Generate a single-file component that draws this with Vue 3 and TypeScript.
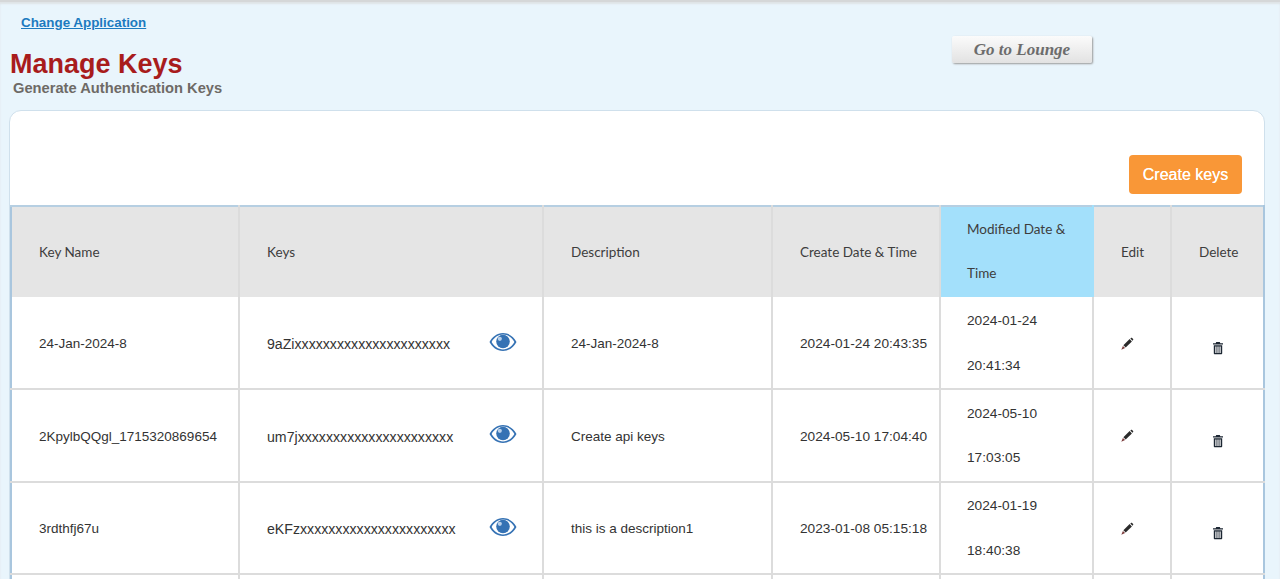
<script setup lang="ts">
interface Row { name: string; key: string; desc: string; created: string; modDate: string; modTime: string }
const rows: Row[] = [
  { name: '24-Jan-2024-8', key: '9aZixxxxxxxxxxxxxxxxxxxxxx', desc: '24-Jan-2024-8', created: '2024-01-24 20:43:35', modDate: '2024-01-24', modTime: '20:41:34' },
  { name: '2KpylbQQgl_1715320869654', key: 'um7jxxxxxxxxxxxxxxxxxxxxxx', desc: 'Create api keys', created: '2024-05-10 17:04:40', modDate: '2024-05-10', modTime: '17:03:05' },
  { name: '3rdthfj67u', key: 'eKFzxxxxxxxxxxxxxxxxxxxxxx', desc: 'this is a description1', created: '2023-01-08 05:15:18', modDate: '2024-01-19', modTime: '18:40:38' },
]
</script>

<template>
  <div class="page">
    <a class="change" href="#">Change Application</a>
    <div class="head">
      <div class="titles">
        <h1>Manage Keys</h1>
        <h2>Generate Authentication Keys</h2>
      </div>
      <button class="lounge" type="button">Go to Lounge</button>
    </div>
    <section class="panel">
      <div class="actions"><button class="create" type="button">Create keys</button></div>
      <table>
        <colgroup>
          <col class="c1" /><col class="c2" /><col class="c3" /><col class="c4" />
          <col class="c5" /><col class="c6" /><col class="c7" />
        </colgroup>
        <thead>
          <tr>
            <th>Key Name</th><th>Keys</th><th>Description</th><th>Create Date &amp; Time</th>
            <th class="sorted">Modified Date &amp; Time</th><th>Edit</th><th>Delete</th>
          </tr>
        </thead>
        <tbody>
          <tr v-for="r in rows" :key="r.name">
            <td>{{ r.name }}</td>
            <td>
              <div class="keycell">
                <span class="keytext">{{ r.key }}</span>
                <svg class="eye" viewBox="0 0 28 20" width="28" height="20" aria-hidden="true">
                  <path fill="#3572b4" fill-rule="evenodd" d="M14 1C8 1 3 5 .5 10 3 15 8 19 14 19s11-4 13.500-9C25 5 20 1 14 1Zm0 1.600C9.200 2.600 5 5.600 2.600 10 5 14.400 9.200 17.400 14 17.400s9-3 11.400-7.400C23 5.600 18.800 2.600 14 2.600Z" />
                  <circle cx="14" cy="9.500" r="6.800" fill="#3572b4" />
                  <circle cx="10.800" cy="6.800" r="2.100" fill="#b9d0ea" />
                </svg>
              </div>
            </td>
            <td>{{ r.desc }}</td>
            <td class="date">{{ r.created }}</td>
            <td class="date mod">{{ r.modDate }}<br />{{ r.modTime }}</td>
            <td class="ic">
              <svg class="pencil" viewBox="0 0 14 14" width="14" height="14" aria-hidden="true">
                <path fill="#2a2a2a" d="M3.400 8.300 9.600 2.100l2.300 2.300-6.200 6.200Z" />
                <path fill="#2a2a2a" d="M10.300 1.400 11 .9c.4-.3.8-.3 1.100 0l1 1c.3.3.3.7 0 1.100l-.6.700Z" />
                <path fill="#7a3a3a" d="M2.900 8.900 5.100 11.100 1.300 12.700Z" />
              </svg>
            </td>
            <td class="ic">
              <svg class="trash" viewBox="0 0 12 14" width="12" height="14" aria-hidden="true">
                <path fill="#1d2733" d="M4.200 1h3.600l.5 1.200H11v1.300H1V2.200h2.700Z" />
                <path fill="#1d2733" fill-rule="evenodd" d="M1.800 4.200h8.400v8c0 .6-.4 1-1 1H2.800c-.6 0-1-.4-1-1Zm1.500 1.200v6.600h1.200V5.400Zm2.100 0v6.600h1.200V5.400Zm2.100 0v6.600h1.200V5.400Z" />
              </svg>
            </td>
          </tr>
          <tr class="more"><td></td><td></td><td></td><td></td><td></td><td></td><td></td></tr>
        </tbody>
      </table>
    </section>
  </div>
</template>

<style scoped>
.page {
  height: 579px;
  overflow: hidden;
  box-sizing: border-box;
  background: #e9f5fc;
  border-top: 2px solid #d5d7d8;
  box-shadow: inset 0 2px 2px #dfe3e6;
  font-family: "Liberation Sans", Arial, sans-serif;
}
.change {
  display: block;
  width: max-content;
  margin: 13px 0 0 21px;
  font-size: 13.4px;
  line-height: 15px;
  font-weight: 700;
  color: #1c7bc0;
  text-decoration: underline;
}
.head { display: flex; align-items: flex-start; height: 80px; }
.titles { width: 952px; padding: 19px 0 0 10px; box-sizing: border-box; }
h1 { margin: 0; font-size: 27px; line-height: 31px; font-weight: 700; color: #a81c1c; }
h2 { margin: 0 0 0 3px; font-size: 14.7px; line-height: 16px; font-weight: 700; color: #6e6a66; }
.lounge {
  width: 140px;
  height: 27px;
  margin-top: 6px;
  padding: 0;
  border: 0;
  border-radius: 2px;
  background: linear-gradient(#fbfbfb, #e2e2e2);
  box-shadow: 1px 1px 2px #9a9a9a;
  font-family: "Liberation Serif", "DejaVu Serif", serif;
  font-style: italic;
  font-weight: 700;
  font-size: 17px;
  color: #6c6c6c;
}
.panel {
  margin: 0 15px 0 9px;
  height: 500px;
  background: #fff;
  border: 1px solid #cfe0ec;
  border-radius: 12px 12px 0 0;
  box-sizing: border-box;
}
.actions { display: flex; justify-content: flex-end; height: 94px; padding: 44px 22px 0 0; box-sizing: border-box; }
.create {
  width: 113px;
  height: 39px;
  padding: 0;
  border: 0;
  border-radius: 4px;
  background: #f99737;
  color: #fff;
  font-family: "Liberation Sans", Arial, sans-serif;
  font-size: 16px;
  text-shadow: 0 0 .5px #fff;
}
table {
  table-layout: fixed;
  border-collapse: collapse;
  width: 1253px;
  border-top: 2px solid #b6cfe2;
  border-left: 2px solid #a9c6de;
  border-right: 2px solid #a9c6de;
  font-size: 13.5px;
  color: #333;
}
.c1 { width: 228px; }
.c2 { width: 304px; }
.c3 { width: 229px; }
.c4 { width: 168px; }
.c5 { width: 153px; }
.c6 { width: 78px; }
.c7 { width: 93px; }
th {
  height: 91px;
  padding: 0 20px 0 27px;
  box-sizing: border-box;
  background: #e5e5e5;
  border-right: 2px solid #dcdcdc;
  text-align: left;
  font-family: Lato, "Noto Sans", sans-serif;
  font-size: 13.5px;
  font-weight: 400;
  line-height: 44px;
  color: #3d3d3d;
}
th.sorted { background: #a3e0fb; border-right-color: #a3e0fb; padding: 0 20px 2px 26px; }
td {
  height: 92.33px;
  padding: 3px 20px 0 27px;
  box-sizing: border-box;
  border-right: 2px solid #dcdcdc;
  border-bottom: 2px solid #dcdcdc;
  line-height: 44.6px;
  white-space: nowrap;
}
th:last-child, td:last-child { border-right: 0; }
.date { font-size: 13.7px; }
td.mod { padding: 1.7px 20px 0 26px; line-height: 44.3px; }
.keycell { display: flex; align-items: center; justify-content: space-between; margin-right: 5px; }
.keytext { font-size: 14.15px; }
.eye { display: block; position: relative; top: -2.5px; }
td.ic { text-align: center; padding: 0; }
.ic svg { display: block; margin: 0 auto; }
.pencil { position: relative; left: -5px; top: 1px; }
.trash { position: relative; top: 5.5px; }
</style>

<style>
html, body { margin: 0; overflow: hidden; }
</style>
